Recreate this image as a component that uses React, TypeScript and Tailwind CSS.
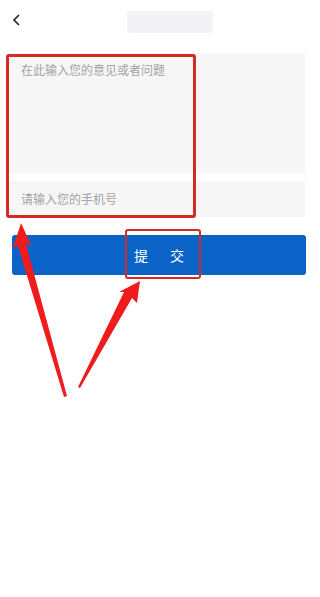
import React from "react";

const cjk = { fontFamily: '"Noto Sans CJK SC", "Noto Sans", sans-serif' };

function Arrows() {
  return (
    <svg className="absolute left-0 top-0 pointer-events-none" width="320" height="597" viewBox="0 0 320 597">
      <polygon points="21,223 31,245 26,244 67,396 64,397 18,246 13,248" fill="#ee1c1c" />
      <polygon points="140,281 137,303 132,298 80,388 78,387 124,292 119,292" fill="#ee1c1c" />
    </svg>
  );
}

export default function App() {
  return (
    <div className="relative w-[320px] h-[597px] bg-white overflow-hidden" style={cjk}>
      <header className="relative h-[44px] flex items-center justify-center">
        <svg className="absolute left-[12px] top-[14px]" width="9" height="12" viewBox="0 0 9 12">
          <path d="M7 1 L2 6 L7 11" fill="none" stroke="#222" strokeWidth="1.6" />
        </svg>
        <div className="ml-[20px] w-[86px] h-[22px] rounded-[2px] bg-[#f3f3f5]" />
      </header>

      <section className="px-[8px] pt-[9px] pr-[15px]">
        <div className="h-[120px] bg-[#f6f6f6] px-[13px] pt-[8px] text-[12px] text-[#a3a3a3]">
          在此输入您的意见或者问题
        </div>
        <div className="mt-[8px] h-[36px] bg-[#f6f6f6] px-[13px] flex items-center text-[12px] text-[#a3a3a3]">
          请输入您的手机号
        </div>
      </section>

      <div className="mx-[12px] mr-[14px] mt-[18px] h-[40px] rounded-[3px] bg-[#0b63c8] flex items-center justify-center gap-[22px] text-white text-[14px]">
        <span>提</span>
        <span>交</span>
      </div>

      <div className="absolute left-[6px] top-[54px] w-[190px] h-[164px] border-[3px] border-[#d42a22] rounded-[3px]" />
      <div className="absolute left-[125px] top-[229px] w-[76px] h-[50px] border-[2.5px] border-[#d42a22] rounded-[3px]" />
      <Arrows />
    </div>
  );
}
